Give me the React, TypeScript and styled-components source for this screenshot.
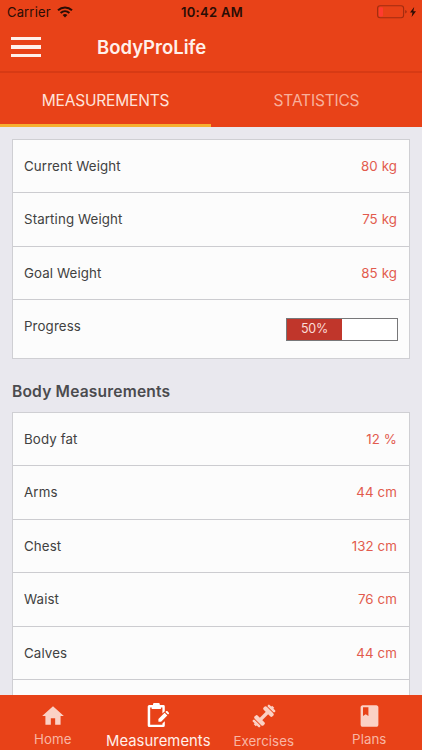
import React from "react";
import styled, { createGlobalStyle } from "styled-components";

const GlobalStyle = createGlobalStyle`
  *, *::before, *::after { box-sizing: border-box; }
  body { margin: 0; background: #e9e8ee; font-family: Inter, "Liberation Sans", sans-serif; }
`;

const Screen = styled.div`
  display: flex;
  flex-direction: column;
  width: 422px;
  height: 750px;
  overflow: hidden;
  background: #e9e8ee;
`;

const StatusBar = styled.div`
  flex: none;
  display: grid;
  grid-template-columns: 1fr auto 1fr;
  align-items: center;
  height: 24px;
  padding: 0 5px 0 7px;
  background: #e84218;
  color: #2a0d05;
  font-size: 13px;
  line-height: 24px;
`;

const Carrier = styled.div`
  display: flex;
  align-items: center;
  gap: 6px;
  letter-spacing: 0.16px;
`;

const Clock = styled.div`
  font-weight: 600;
  letter-spacing: 0.3px;
`;

const Power = styled.div`
  display: flex;
  justify-content: flex-end;
`;

const Header = styled.header`
  flex: none;
  display: flex;
  align-items: center;
  height: 49px;
  padding: 0 11px 1px;
  border-bottom: 2px solid #d73a14;
  background: #e84218;
`;

const MenuButton = styled.button`
  display: flex;
  flex-direction: column;
  gap: 5px;
  width: 30px;
  margin-right: 56px;
  padding: 0;
  border: 0;
  background: none;
`;

const MenuLine = styled.span`
  height: 3.4px;
  background: #fff0eb;
`;

const Title = styled.h1`
  margin: 0;
  color: #fff0eb;
  font-size: 18.5px;
  font-weight: 600;
  line-height: 24px;
`;

const Tabs = styled.div`
  flex: none;
  display: grid;
  grid-template-columns: 1fr 1fr;
  height: 54px;
  background: #e84218;
`;

const Tab = styled.div<{ $active?: boolean }>`
  padding-top: 17.5px;
  border-bottom: 3px solid ${(p) => (p.$active ? "#f6b02f" : "#e84218")};
  color: ${(p) => (p.$active ? "#ffe3da" : "#f8b09c")};
  font-size: 15.5px;
  line-height: 20px;
  letter-spacing: -0.18px;
  text-align: center;
`;

const Content = styled.main`
  flex: 1;
  min-height: 0;
  overflow: hidden;
  padding: 11.6px 12px 0;
`;

const Card = styled.section`
  border: 1px solid #cfcfd3;
  background: #fcfcfc;
`;

const Row = styled.div<{ $tall?: boolean }>`
  display: flex;
  justify-content: space-between;
  height: ${(p) => (p.$tall ? "58.6px" : "53.5px")};
  padding: 16px 12px 0 11px;
  font-size: 13.3px;
  line-height: 20px;
  &:first-child { height: 52.5px; }
  & + & { border-top: 1px solid #ccccd0; }
`;

const Label = styled.span`
  color: #414141;
  letter-spacing: 0.12px;
`;

const Value = styled.span`
  color: #e25b4e;
  letter-spacing: 0.1px;
`;

const Progress = styled.div`
  width: 112px;
  height: 23px;
  margin: 1.5px -1px 0 0;
  border: 1px solid #777779;
  background: #fff;
`;

const ProgressFill = styled.div`
  width: 50%;
  height: 21px;
  background: #c0362b;
  color: #fbdcd8;
  font-size: 12.5px;
  line-height: 19px;
  letter-spacing: -0.2px;
  text-align: center;
`;

const SectionTitle = styled.h2`
  height: 53.2px;
  margin: 0;
  padding-top: 23px;
  color: #4b4b4e;
  font-size: 15.6px;
  font-weight: 600;
  line-height: 20px;
  letter-spacing: 0.17px;
`;

const BottomNav = styled.nav`
  flex: none;
  display: grid;
  grid-template-columns: repeat(4, 1fr);
  height: 55px;
  background: #e84218;
`;

const NavItem = styled.div<{ $active?: boolean; $drop?: number }>`
  display: flex;
  flex-direction: column;
  align-items: center;
  justify-content: space-between;
  height: ${(p) => 54 + (p.$drop ?? 0)}px;
  padding-top: ${(p) => (p.$active ? "6px" : "8px")};
  color: ${(p) => (p.$active ? "#ffffff" : "#fbd1c5")};
`;

const NavLabel = styled.span<{ $active?: boolean }>`
  color: ${(p) => (p.$active ? "#fff0eb" : "#f8b6a4")};
  font-size: ${(p) => (p.$active ? "14.8px" : "13.3px")};
  line-height: 20px;
  letter-spacing: ${(p) => (p.$active ? 0.06 : 0.05)}px;
`;

const WifiIcon = () => (
  <svg width="16" height="12" viewBox="0 0 16 12" fill="none" stroke="currentColor" strokeWidth="2">
    <path d="M1 4.3C5 .6 11 .6 15 4.3M3.6 7c2.6-2.3 6.2-2.3 8.8 0" />
    <path d="M8 11.4 5.6 9q2.4-2 4.8 0z" fill="currentColor" stroke="none" />
  </svg>
);

const BatteryIcon = () => (
  <svg width="40" height="14" viewBox="0 0 40 14">
    <rect x=".6" y=".8" width="26" height="12" rx="2.5" fill="none" stroke="#a12c10" strokeWidth="1.1" />
    <rect x="2" y="2.2" width="4" height="9.2" rx="1" fill="#ff3b30" />
    <path d="M28.2 5v3.6q1.6-.5 1.6-1.8T28.2 5z" fill="#a12c10" />
    <path d="M37.2 2 33 7.6h2.5L34.6 12l4.4-5.8h-2.7z" fill="#2a0d05" />
  </svg>
);

const HomeIcon = () => (
  <svg width="26" height="26" viewBox="0 0 24 24" fill="currentColor">
    <path d="M10 20v-6h4v6h5v-8h3L12 3 2 12h3v8z" />
  </svg>
);

const ClipboardIcon = () => (
  <svg width="28" height="28" viewBox="0 0 28 28" fill="currentColor">
    <path d="M20.8 10.2V5.4a1.4 1.4 0 0 0-1.4-1.4h-3.6V3.2a1.2 1.2 0 0 0-1.2-1.2h-4.4A1.2 1.2 0 0 0 9 3.2V4H5.3A1.6 1.6 0 0 0 3.7 5.6v18.8A1.6 1.6 0 0 0 5.3 26h13.9a1.6 1.6 0 0 0 1.6-1.6V20.3l-2.4 2.2v1.2H6.2V6.4h1.5v1.7h9.2V6.4h1.5v6.1z" />
    <path d="m14.4 18 6.2-6.2 2.7 2.7-6.2 6.2h-2.7zM21.4 11l.9-.9q.5-.4 1 0l1.6 1.6q.4.5 0 1l-.9.9z" />
  </svg>
);

const DumbbellIcon = () => (
  <svg width="26" height="26" viewBox="0 0 26 26" fill="currentColor">
    <g transform="rotate(-45 13 13)">
      <rect x="7" y="11.3" width="12" height="3.4" />
      <rect x="4.5" y="6.7" width="4.4" height="12.6" rx="1.7" />
      <rect x="17.1" y="6.7" width="4.4" height="12.6" rx="1.7" />
      <rect x="1.2" y="8.1" width="2.5" height="9.8" rx="1.1" />
      <rect x="22.3" y="8.1" width="2.5" height="9.8" rx="1.1" />
      <rect x="0" y="11.5" width="2" height="3" />
      <rect x="24" y="11.5" width="2" height="3" />
    </g>
  </svg>
);

const PlansIcon = () => (
  <svg width="27" height="27" viewBox="0 0 24 24" fill="currentColor">
    <path d="M18.3 2H5.7C4.6 2 3.8 2.9 3.8 4v16c0 1.1.8 2 1.9 2h12.6c1.1 0 1.9-.9 1.9-2V4c0-1.1-.8-2-1.9-2zM6 4h5v8l-2.5-1.7L6 12V4z" />
  </svg>
);

const weights = [
  ["Current Weight", "80 kg"],
  ["Starting Weight", "75 kg"],
  ["Goal Weight", "85 kg"],
];

const measurements = [
  ["Body fat", "12 %"],
  ["Arms", "44 cm"],
  ["Chest", "132 cm"],
  ["Waist", "76 cm"],
  ["Calves", "44 cm"],
  ["", ""],
];

export default function App() {
  return (
    <Screen>
      <GlobalStyle />
      <StatusBar>
        <Carrier>Carrier<WifiIcon /></Carrier>
        <Clock>10:42 AM</Clock>
        <Power><BatteryIcon /></Power>
      </StatusBar>
      <Header>
        <MenuButton aria-label="Menu"><MenuLine /><MenuLine /><MenuLine /></MenuButton>
        <Title>BodyProLife</Title>
      </Header>
      <Tabs>
        <Tab $active>MEASUREMENTS</Tab>
        <Tab>STATISTICS</Tab>
      </Tabs>
      <Content>
        <Card>
          {weights.map(([label, value]) => (
            <Row key={label}><Label>{label}</Label><Value>{value}</Value></Row>
          ))}
          <Row $tall>
            <Label>Progress</Label>
            <Progress><ProgressFill>50%</ProgressFill></Progress>
          </Row>
        </Card>
        <SectionTitle>Body Measurements</SectionTitle>
        <Card>
          {measurements.map(([label, value]) => (
            <Row key={label}><Label>{label}</Label><Value>{value}</Value></Row>
          ))}
        </Card>
      </Content>
      <BottomNav>
        <NavItem><HomeIcon /><NavLabel>Home</NavLabel></NavItem>
        <NavItem $active $drop={2}><ClipboardIcon /><NavLabel $active>Measurements</NavLabel></NavItem>
        <NavItem $drop={2}><DumbbellIcon /><NavLabel>Exercises</NavLabel></NavItem>
        <NavItem><PlansIcon /><NavLabel>Plans</NavLabel></NavItem>
      </BottomNav>
    </Screen>
  );
}
